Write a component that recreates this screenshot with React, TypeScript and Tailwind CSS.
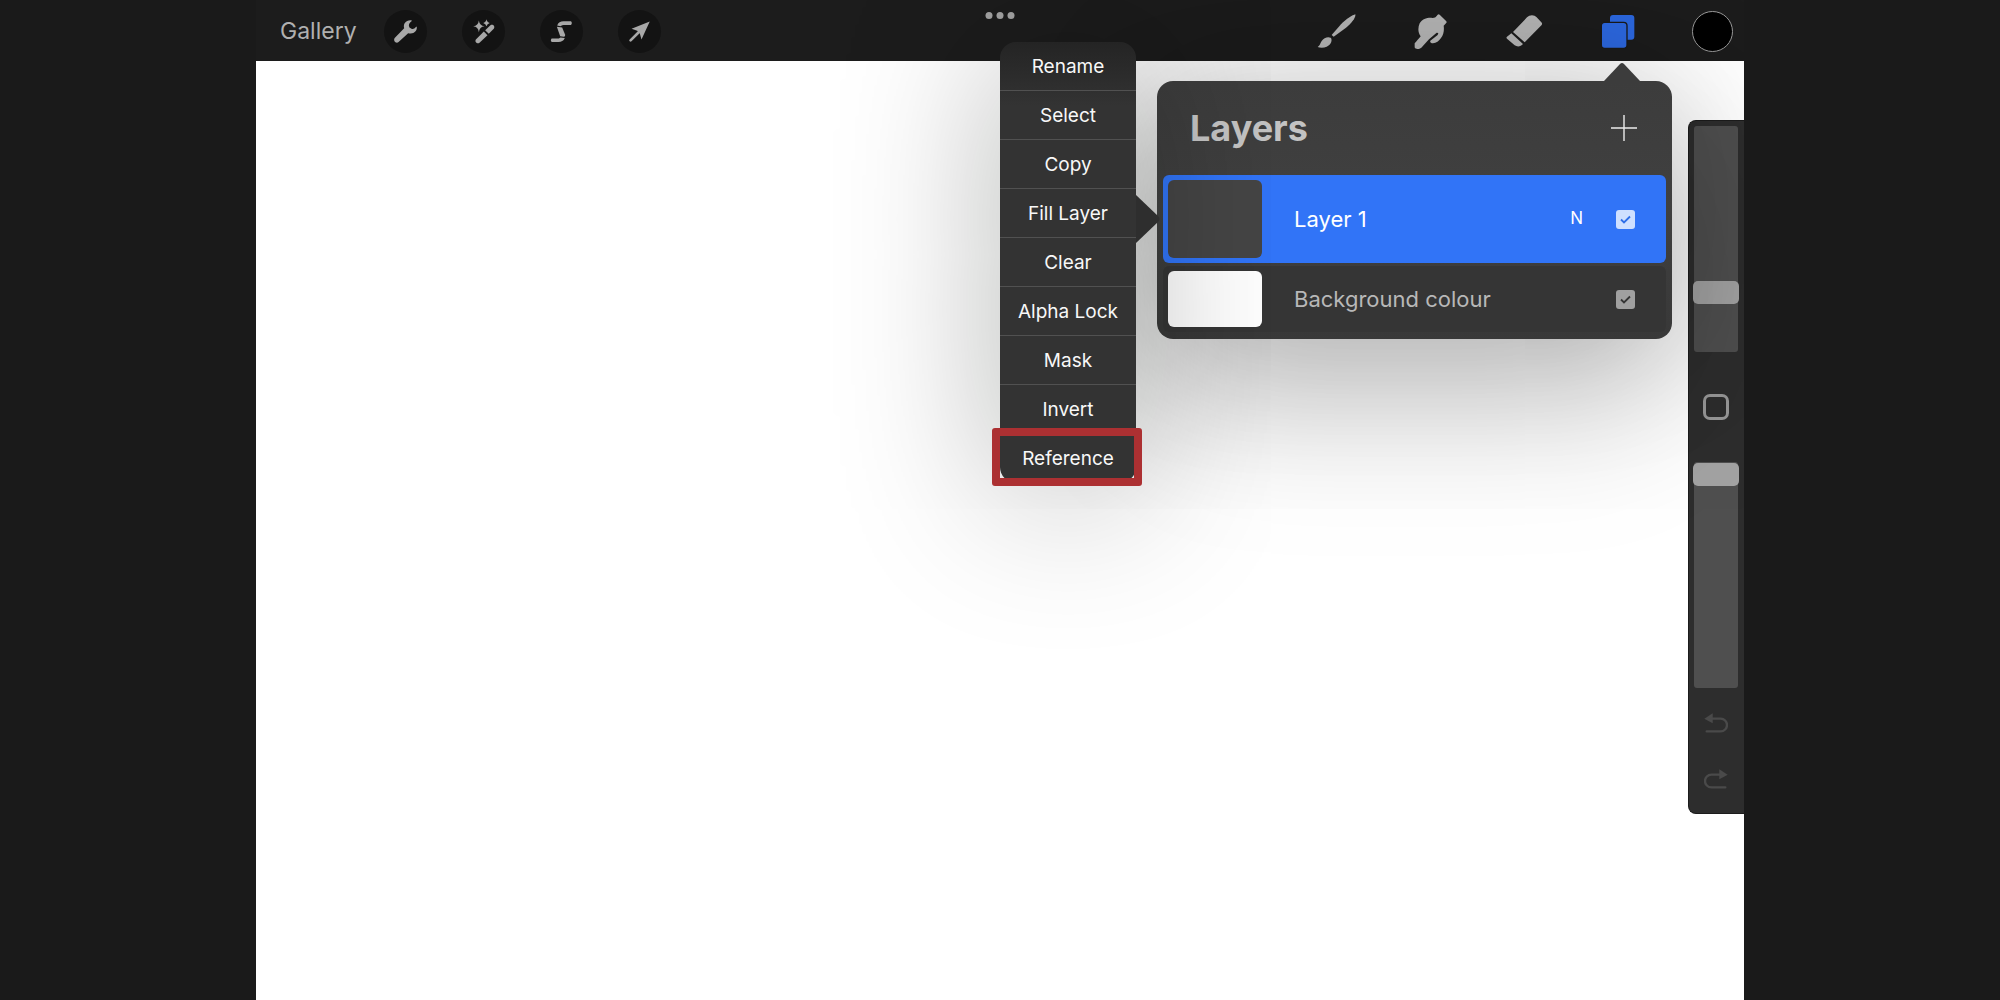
import { JSX, ReactNode, useState } from 'react'

type Layer = {
  id: string
  name: string
  blend?: string
  visible: boolean
}

const menuItems = [
  'Rename',
  'Select',
  'Copy',
  'Fill Layer',
  'Clear',
  'Alpha Lock',
  'Mask',
  'Invert',
  'Reference'
]

const initialLayers: Layer[] = [
  { id: 'layer-1', name: 'Layer 1', blend: 'N', visible: true },
  { id: 'background', name: 'Background colour', visible: true }
]

function WrenchIcon(): JSX.Element {
  return (
    <svg viewBox="0 0 130 130" className="size-full" fill="currentColor" aria-hidden="true">
      <path d="M83 31C67 29 57 41 61 55L33 84C26 92 36 103 44 97L73 70C88 75 101 65 99 51L97 51C92 57 88 59 83 57L77 53C73 46 76 38 84 33Z" />
    </svg>
  )
}

function WandIcon(): JSX.Element {
  return (
    <svg viewBox="0 0 130 130" className="size-full" fill="currentColor" aria-hidden="true">
      <path d="M66 65L77 76L53 99C46 104 37 96 42 89Z" />
      <path d="M70 61L86 46C94 42 101 50 96 57L81 72Z" />
      <path d="M51 32Q53 48 68 49Q53 51 51 67Q49 51 34 49Q49 48 51 32Z" />
      <path d="M74 28Q76 38 84 39Q76 41 74 49Q72 41 64 39Q72 38 74 28Z" />
    </svg>
  )
}

function SelectionIcon(): JSX.Element {
  return (
    <svg viewBox="0 0 130 130" className="size-full" fill="currentColor" aria-hidden="true">
      <path d="M52 47C55 37 62 34 71 34H94Q99 39 94 45H76C69 45 65 46 62 49Z" />
      <path d="M51 51L67 53L76 75Q77 81 72 81L61 79Z" />
      <path d="M35 86H57L62 83L75 85C71 94 65 97 56 97H35Q30 91 35 86Z" />
    </svg>
  )
}

function ArrowIcon(): JSX.Element {
  return (
    <svg viewBox="0 0 130 130" className="size-full" fill="currentColor" aria-hidden="true">
      <path d="M96 35L41 57L58 63L66 71L71 89Z" />
      <path d="M38 92L65 65" stroke="currentColor" strokeWidth="8" strokeLinecap="round" />
    </svg>
  )
}

function BrushIcon(): JSX.Element {
  return (
    <svg viewBox="80 43 120 105" className="h-[35px] w-10" fill="currentColor" aria-hidden="true">
      <path d="M198 44C200 52 188 70 170 84L133 111L127 106L155 74C171 57 190 46 198 44Z" />
      <path d="M124 114C130 120 126 134 112 141C104 145 92 145 85 142C92 138 92 132 97 124C103 114 116 110 124 114Z" />
    </svg>
  )
}

function SmudgeIcon(): JSX.Element {
  return (
    <svg viewBox="361 42 120 108" className="h-9 w-10" fill="currentColor" aria-hidden="true">
      <path d="M444 44Q447 41 450 44L470 64Q472 67 469 70L462 77C464 90 462 104 454 114C448 122 440 130 430 130C424 130 420 127 422 122L444 105L446 99L441 98L418 118L395 143C388 149 376 148 375 142V130C380 124 388 116 393 109C385 98 384 84 390 70C398 56 416 52 428 54C436 54 440 50 444 44Z" />
    </svg>
  )
}

function EraserIcon(): JSX.Element {
  return (
    <svg viewBox="643 43 120 105" className="h-[35px] w-10" fill="currentColor" aria-hidden="true">
      <path d="M670 97L712 53C720 45 734 45 741 53L755 68Q759 72 756 76L705 128Z" />
      <path d="M665 101L700 133C693 142 682 142 675 137L652 117Q648 114 652 111Z" />
    </svg>
  )
}

function LayersIcon(): JSX.Element {
  return (
    <svg viewBox="174 42 120 105" className="h-[35px] w-10" aria-hidden="true">
      <rect x="210" y="45" width="73" height="74" rx="9" fill="#2c67de" />
      <rect x="184" y="67" width="77" height="78" rx="10" fill="#2c67de" stroke="#1a1a1a" strokeWidth="4" />
    </svg>
  )
}

function UndoIcon({ className }: { className?: string }): JSX.Element {
  return (
    <svg viewBox="0 0 72 60" className={className} fill="none" aria-hidden="true">
      <path d="M1 17L26 1V31Z" fill="currentColor" />
      <path d="M24 17H50A18 18 0 0 1 50 55H8" stroke="currentColor" strokeWidth="7" strokeLinecap="round" />
    </svg>
  )
}

function RoundTool({ label, children }: { label: string; children: ReactNode }): JSX.Element {
  return (
    <button
      type="button"
      aria-label={label}
      className="size-[43px] rounded-full bg-[#131313] text-[#a8a8a8]"
    >
      {children}
    </button>
  )
}

function PaintTool({ label, children }: { label: string; children: ReactNode }): JSX.Element {
  return (
    <button type="button" aria-label={label} className="flex w-10 justify-center text-[#b4b4b4]">
      {children}
    </button>
  )
}

function Toolbar(): JSX.Element {
  return (
    <header className="relative flex h-[61px] items-center justify-between bg-[#1c1c1c] pt-0.5 pr-[11px] pl-6">
      <div className="flex items-center gap-[27px]">
        <button type="button" className="text-[23px] text-[#b0b0b0]">
          Gallery
        </button>
        <div className="flex gap-[35px]">
          <RoundTool label="Actions">
            <WrenchIcon />
          </RoundTool>
          <RoundTool label="Adjustments">
            <WandIcon />
          </RoundTool>
          <RoundTool label="Selection">
            <SelectionIcon />
          </RoundTool>
          <RoundTool label="Transform">
            <ArrowIcon />
          </RoundTool>
        </div>
      </div>

      <button
        type="button"
        aria-label="Multitasking"
        className="absolute top-3 left-1/2 flex -translate-x-1/2 gap-1"
      >
        <span className="size-[7px] rounded-full bg-[#a3a3a3]" />
        <span className="size-[7px] rounded-full bg-[#a3a3a3]" />
        <span className="size-[7px] rounded-full bg-[#a3a3a3]" />
      </button>

      <div className="flex items-center gap-[54px]">
        <PaintTool label="Paint">
          <BrushIcon />
        </PaintTool>
        <PaintTool label="Smudge">
          <SmudgeIcon />
        </PaintTool>
        <PaintTool label="Erase">
          <EraserIcon />
        </PaintTool>
        <PaintTool label="Layers">
          <LayersIcon />
        </PaintTool>
        <button
          type="button"
          aria-label="Colour"
          className="size-[41px] rounded-full border border-[#9a9a9a] bg-black"
        />
      </div>
    </header>
  )
}

function LayerMenu(): JSX.Element {
  return (
    <div className="relative z-10 w-[136px] rounded-[16px] bg-linear-to-b from-[#242424] to-[#333333] to-[64px] shadow-[0_10px_160px_rgba(8,10,0,0.30)]">
      <ul>
        {menuItems.map((item) => (
          <li
            key={item}
            className="relative h-[49px] border-b border-[#515151] last:border-b-0"
          >
            <button type="button" className="size-full pt-0.5 text-[19px] text-[#f8f8f8]">
              {item}
            </button>
            {item === 'Reference' && (
              <span className="pointer-events-none absolute -top-1.5 -right-1.5 -bottom-[3px] -left-2 rounded-[3px] border-8 border-[#ac3032]" />
            )}
          </li>
        ))}
      </ul>
      <svg
        viewBox="0 0 25 48"
        className="absolute top-[153px] left-full h-12 w-[25px]"
        aria-hidden="true"
      >
        <path d="M0 0L22 21Q25 24 22 27L0 48Z" fill="#2e2e2e" />
      </svg>
    </div>
  )
}

type LayerRowProps = {
  layer: Layer
  selected: boolean
  onToggle: () => void
}

function LayerRow({ layer, selected, onToggle }: LayerRowProps): JSX.Element {
  return (
    <li
      className={`flex items-center rounded-md pr-[31px] pl-[5px] ${
        selected ? 'h-[88px] bg-[#3174f7] text-white' : 'h-[66px] bg-[#353535] text-[#b8b8b8]'
      }`}
    >
      <span
        className={`w-[94px] rounded-md ${
          selected ? 'h-[78px] bg-[#454545]' : 'h-14 bg-white'
        }`}
      />
      <label htmlFor={layer.id} className="ml-8 flex-1 text-[22px]">
        {layer.name}
      </label>
      {layer.blend && (
        <button type="button" aria-label="Blend mode" className="mr-[33px] text-[17px]">
          {layer.blend}
        </button>
      )}
      <span className="relative size-[19px]">
        <input
          id={layer.id}
          type="checkbox"
          checked={layer.visible}
          onChange={onToggle}
          className={`block size-full appearance-none rounded-[3px] ${
            selected ? 'bg-[#cfe0ff]' : 'bg-[#a0a0a0]'
          }`}
        />
        {layer.visible && (
          <svg
            viewBox="0 0 19 19"
            className={`pointer-events-none absolute inset-0 ${
              selected ? 'text-[#2f6fe8]' : 'text-[#353535]'
            }`}
            fill="none"
            aria-hidden="true"
          >
            <path d="M5 9.500L8 12.500L14 6.500" stroke="currentColor" strokeWidth="1.800" />
          </svg>
        )}
      </span>
    </li>
  )
}

function LayersPanel(): JSX.Element {
  const [layers, setLayers] = useState<Layer[]>(initialLayers)

  const toggleLayer = (id: string): void => {
    setLayers(
      layers.map((layer) => (layer.id === id ? { ...layer, visible: !layer.visible } : layer))
    )
  }

  return (
    <section className="relative mt-[39px] w-[515px] rounded-[16px] bg-linear-to-b from-[#3c3c3c] via-[#404040] to-[#383838] px-1.5 pb-[7px] shadow-[0_70px_160px_rgba(0,0,0,0.20),0_0_140px_rgba(0,0,0,0.20)]">
      <svg
        viewBox="0 0 36 19"
        className="absolute right-8 bottom-full h-[19px] w-9"
        aria-hidden="true"
      >
        <path d="M0 19L16 2Q18 0 20 2L36 19Z" fill="#3c3c3c" />
      </svg>
      <div className="flex h-[94px] items-center justify-between pr-[29px] pl-[27px]">
        <h2 className="text-4xl font-bold text-[#c3c3c3]">Layers</h2>
        <button type="button" aria-label="Add layer" className="text-[#ececec]">
          <svg viewBox="0 0 26 26" className="size-[26px]" fill="none" aria-hidden="true">
            <path d="M13 0V26M0 13H26" stroke="currentColor" strokeWidth="1.400" />
          </svg>
        </button>
      </div>
      <ul className="flex flex-col gap-[3px]">
        {layers.map((layer, index) => (
          <LayerRow
            key={layer.id}
            layer={layer}
            selected={index === 0}
            onToggle={() => toggleLayer(layer.id)}
          />
        ))}
      </ul>
    </section>
  )
}

function SideSlider({ label, initial }: { label: string; initial: number }): JSX.Element {
  const [value, setValue] = useState<number>(initial)

  return (
    <input
      type="range"
      aria-label={label}
      min={0}
      max={100}
      value={value}
      onChange={(e) => setValue(Number(e.target.value))}
      className="block h-[226px] w-11 appearance-none rounded-[3px] bg-[#4f4f4f] [direction:rtl] [writing-mode:vertical-lr] [&::-webkit-slider-thumb]:-mx-px [&::-webkit-slider-thumb]:h-[23px] [&::-webkit-slider-thumb]:w-[46px] [&::-webkit-slider-thumb]:appearance-none [&::-webkit-slider-thumb]:rounded-[5px] [&::-webkit-slider-thumb]:bg-[#a3a3a3]"
    />
  )
}

function SideBar(): JSX.Element {
  return (
    <aside className="absolute top-[120px] right-0 flex w-14 flex-col items-center rounded-l-lg border border-r-0 border-[#1c1c1c] bg-[#2d2d2d] pt-[5px] pr-px pb-6">
      <SideSlider label="Brush size" initial={24} />
      <button
        type="button"
        aria-label="Modify"
        className="my-[42px] size-[26px] rounded-[7px] border-[3px] border-[#979797]"
      />
      <SideSlider label="Brush opacity" initial={100} />
      <button type="button" aria-label="Undo" className="mt-[25px] text-[#4a4a4a]">
        <UndoIcon className="h-5 w-6" />
      </button>
      <button type="button" aria-label="Redo" className="mt-9 text-[#4a4a4a]">
        <UndoIcon className="h-5 w-6 -scale-x-100" />
      </button>
    </aside>
  )
}

export default function App(): JSX.Element {
  return (
    <div className="min-h-screen bg-[#1a1a1a] px-[12.8%] font-['Inter','Liberation_Sans',sans-serif]">
      <div className="relative flex min-h-screen flex-col overflow-hidden">
        <Toolbar />
        <main className="flex-1 bg-white">
          <SideBar />
          <div className="absolute top-[42px] right-[72px] flex items-start gap-[21px]">
            <LayerMenu />
            <LayersPanel />
          </div>
        </main>
      </div>
    </div>
  )
}
